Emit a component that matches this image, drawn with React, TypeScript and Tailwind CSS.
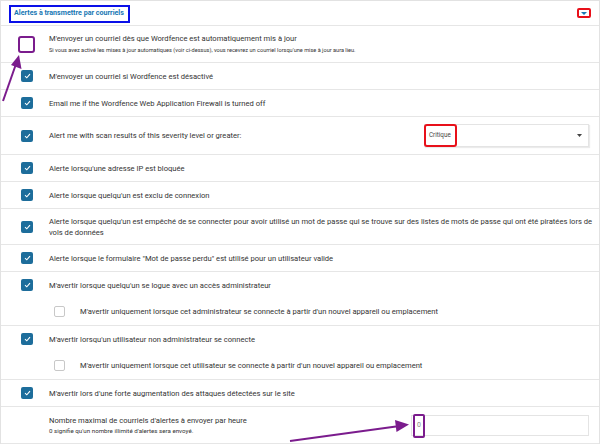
import React from "react";

const Checked = () => (
  <div className="w-[12px] h-[12px] rounded-[2px] bg-[#1d6d9b] flex items-center justify-center">
    <svg width="7" height="6" viewBox="0 0 7 6">
      <path d="M1 3.2 L2.8 4.8 L6 1.2" stroke="#fff" strokeWidth="1.1" fill="none" />
    </svg>
  </div>
);

const Unchecked = () => (
  <div className="w-[11px] h-[11px] rounded-[2px] border border-[#c8c8c8] bg-white" />
);

type RowProps = { h: string; children: React.ReactNode; box?: React.ReactNode };

const Row = ({ h, children, box }: RowProps) => (
  <div className={`flex items-center border-b border-[#e6e6e6] ${h}`}>
    <div className="w-[48px] shrink-0 flex items-center">{box ?? <div className="ml-[20px]"><Checked /></div>}</div>
    <div className="flex-1 min-w-0">{children}</div>
  </div>
);

const T = ({ children }: { children: React.ReactNode }) => (
  <div className="text-[7.6px] leading-[11px] text-[#333]">{children}</div>
);

export default function App() {
  return (
    <div
      className="relative w-[600px] h-[445px] overflow-hidden bg-white"
      style={{ fontFamily: "Roboto, 'Liberation Sans', sans-serif" }}
    >
      <div className="border-t border-x border-[#e2e2e2] w-[600px]">
        {/* header */}
        <div className="h-[25px] border-b border-[#e6e6e6] flex items-center justify-between">
          <div className="ml-[8px] mt-[1px] h-[18px] w-[121px] border-2 border-[#0a10e8] flex items-center pl-[3px]">
            <span className="text-[7.1px] font-bold text-[#1676b3] whitespace-nowrap">Alertes à transmettre par courriels</span>
          </div>
          <div className="mr-[8px] w-[14px] h-[10px] border-2 border-[#e8101a] rounded-[2px] flex items-center justify-center">
            <svg width="6" height="3" viewBox="0 0 6 3"><path d="M0 0 H6 L3 3 Z" fill="#1a78b4" /></svg>
          </div>
        </div>

        <Row
          h="h-[37px]"
          box={
            <div className="ml-[17px] w-[17px] h-[17px] border-2 border-[#7b1c8d] rounded-[3px] bg-white" />
          }
        >
          <T>M'envoyer un courriel dès que Wordfence est automatiquement mis à jour</T>
          <div className="text-[5.6px] leading-[9px] text-[#333] mt-[2px] whitespace-nowrap">
            Si vous avez activé les mises à jour automatiques (voir ci-dessus), vous recevrez un courriel lorsqu'une mise à jour aura lieu.
          </div>
        </Row>

        <Row h="h-[27px]"><T>M'envoyer un courriel si Wordfence est désactivé</T></Row>
        <Row h="h-[27px]"><T>Email me if the Wordfence Web Application Firewall is turned off</T></Row>

        <Row h="h-[38px]">
          <div className="flex items-center justify-between">
            <T>Alert me with scan results of this severity level or greater:</T>
            <div className="mr-[10px] w-[165px] h-[23px] border border-[#e4e4e4] shadow-[1px_1px_1px_rgba(0,0,0,0.08)] bg-white flex items-center justify-between">
              <div className="h-[23px] w-[33px] border-2 border-[#e8101a] rounded-[3px] flex items-center pl-[3px] -ml-[1px]">
                <span className="text-[6.3px] text-[#444] whitespace-nowrap">Critique</span>
              </div>
              <svg className="mr-[6px]" width="5" height="3" viewBox="0 0 5 3"><path d="M0 0 H5 L2.5 3 Z" fill="#444" /></svg>
            </div>
          </div>
        </Row>

        <Row h="h-[27px]"><T>Alerte lorsqu'une adresse IP est bloquée</T></Row>
        <Row h="h-[27px]"><T>Alerte lorsque quelqu'un est exclu de connexion</T></Row>
        <Row h="h-[36px]">
          <T>
            Alerte lorsque quelqu'un est empêché de se connecter pour avoir utilisé un mot de passe qui se trouve sur des listes de mots de passe qui ont été piratées lors de
            <br />
            vols de données
          </T>
        </Row>
        <Row h="h-[27px]"><T>Alerte lorsque le formulaire "Mot de passe perdu" est utilisé pour un utilisateur valide</T></Row>

        {/* row 9 */}
        <div className="h-[54px] border-b border-[#e6e6e6] flex flex-col">
          <div className="h-[26px] flex items-center">
            <div className="w-[48px] shrink-0"><div className="ml-[20px]"><Checked /></div></div>
            <T>M'avertir lorsque quelqu'un se logue avec un accès administrateur</T>
          </div>
          <div className="h-[27px] flex items-center">
            <div className="w-[79px] shrink-0"><div className="ml-[53px]"><Unchecked /></div></div>
            <T>M'avertir uniquement lorsque cet administrateur se connecte à partir d'un nouvel appareil ou emplacement</T>
          </div>
        </div>

        {/* row 10 */}
        <div className="h-[54px] border-b border-[#e6e6e6] flex flex-col">
          <div className="h-[26px] flex items-center">
            <div className="w-[48px] shrink-0"><div className="ml-[20px]"><Checked /></div></div>
            <T>M'avertir lorsqu'un utilisateur non administrateur se connecte</T>
          </div>
          <div className="h-[27px] flex items-center">
            <div className="w-[79px] shrink-0"><div className="ml-[53px]"><Unchecked /></div></div>
            <T>M'avertir uniquement lorsque cet utilisateur se connecte à partir d'un nouvel appareil ou emplacement</T>
          </div>
        </div>

        <Row h="h-[27px]"><T>M'avertir lors d'une forte augmentation des attaques détectées sur le site</T></Row>

        <div className="h-[37px] border-b border-[#e6e6e6] flex items-center">
          <div className="w-[48px] shrink-0" />
          <div className="flex-1">
            <T>Nombre maximal de courriels d'alertes à envoyer par heure</T>
            <div className="text-[6.2px] leading-[9px] text-[#333] mt-[1px]">0 signifie qu'un nombre illimité d'alertes sera envoyé.</div>
          </div>
          <div className="mr-[10px] w-[178px] h-[21px] border border-[#e4e4e4] bg-white flex items-center relative">
            <div className="absolute left-[1px] -top-[2px] w-[12px] h-[24px] border-2 border-[#7b1c8d] rounded-[2px] flex items-center justify-center">
              <span className="text-[7px] text-[#888]">0</span>
            </div>
          </div>
        </div>
      </div>

      {/* annotation arrows */}
      <svg className="absolute left-0 top-0 pointer-events-none" width="600" height="445" viewBox="0 0 600 445">
        <line x1="3" y1="101" x2="16" y2="64" stroke="#7b1c8d" strokeWidth="2" />
        <path d="M19 55 L21.5 69 L11 65 Z" fill="#7b1c8d" />
        <line x1="290" y1="441" x2="396" y2="426.5" stroke="#7b1c8d" strokeWidth="2" />
        <path d="M409 424.5 L395 420 L396.5 432 Z" fill="#7b1c8d" />
      </svg>
    </div>
  );
}
